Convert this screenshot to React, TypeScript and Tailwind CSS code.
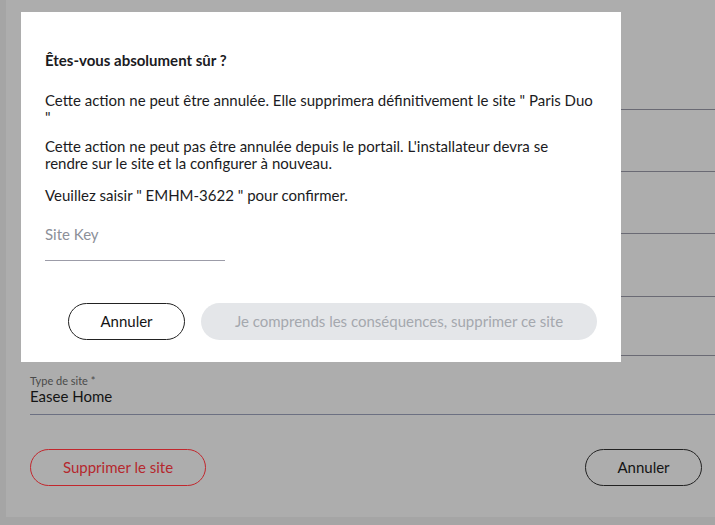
import { useState } from 'react';

const FONT = { fontFamily: 'Lato, "Liberation Sans", sans-serif' };

// fields of the site form, hidden behind the dialog (only the underlines show)
const HIDDEN_FIELDS = ['h-[62px]', 'h-[62px]', 'h-[62px]', 'h-[63px]', 'h-[59px]'];

export default function App() {
  const [siteKey, setSiteKey] = useState('');

  return (
    <div className="relative h-[525px] w-[715px] overflow-hidden bg-[#a5a5a5]" style={FONT}>
      {/* Form behind the dialog */}
      <div className="ml-[6px] flex h-[517px] flex-col bg-[#adadad] pl-[24px]">
        <div className="h-[48px]" />
        {HIDDEN_FIELDS.map((h, i) => (
          <div key={i} className={`border-b border-[#6a6a74] ${h}`} />
        ))}
        <div className="flex h-[59px] flex-col justify-end border-b border-[#6c7082] pb-[9px]">
          <span className="text-[11px] leading-[13px] text-[#4a4a4a]">Type de site *</span>
          <span className="text-[15px] leading-[18px] text-[#141414]">Easee Home</span>
        </div>
        <div className="mt-[34px] flex items-center justify-between pr-[13px]">
          <button
            type="button"
            className="h-[37px] w-[176px] rounded-full border border-[#c2272d] text-[15px] text-[#b5282d]"
          >
            Supprimer le site
          </button>
          <button
            type="button"
            className="h-[37px] w-[117px] rounded-full border border-[#222] text-[15px] text-[#141414]"
          >
            Annuler
          </button>
        </div>
      </div>

      {/* Confirmation dialog */}
      <div className="absolute left-[21px] top-[12px] h-[350px] w-[600px] bg-white px-[24px] pt-[40px] text-[15px] leading-[17px] text-[#1b1b22]">
        <p className="font-bold">Êtes-vous absolument sûr ?</p>
        <p className="mt-[23px]">
          Cette action ne peut être annulée. Elle supprimera définitivement le site " Paris Duo "
        </p>
        <p className="mt-[12px] pr-[8px]">
          Cette action ne peut pas être annulée depuis le portail. L'installateur devra se rendre sur le site et la
          configurer à nouveau.
        </p>
        <p className="mt-[15px]">Veuillez saisir " EMHM-3622 " pour confirmer.</p>
        <input
          value={siteKey}
          onChange={(e) => setSiteKey(e.target.value)}
          placeholder="Site Key"
          className="mt-[16px] block h-[41px] w-[180px] border-b border-[#9c9ca8] pb-[12px] text-[15px] outline-none placeholder:text-[#8c9099]"
        />
        <div className="mt-[42px] flex gap-[16px] pl-[23px]">
          <button
            type="button"
            className="h-[37px] w-[117px] rounded-full border border-[#222] text-[15px] text-[#141414]"
          >
            Annuler
          </button>
          <button
            type="button"
            disabled
            className="h-[37px] flex-1 rounded-full bg-[#e4e6e9] text-[15px] text-[#a4a8ae]"
          >
            Je comprends les conséquences, supprimer ce site
          </button>
        </div>
      </div>
    </div>
  );
}
